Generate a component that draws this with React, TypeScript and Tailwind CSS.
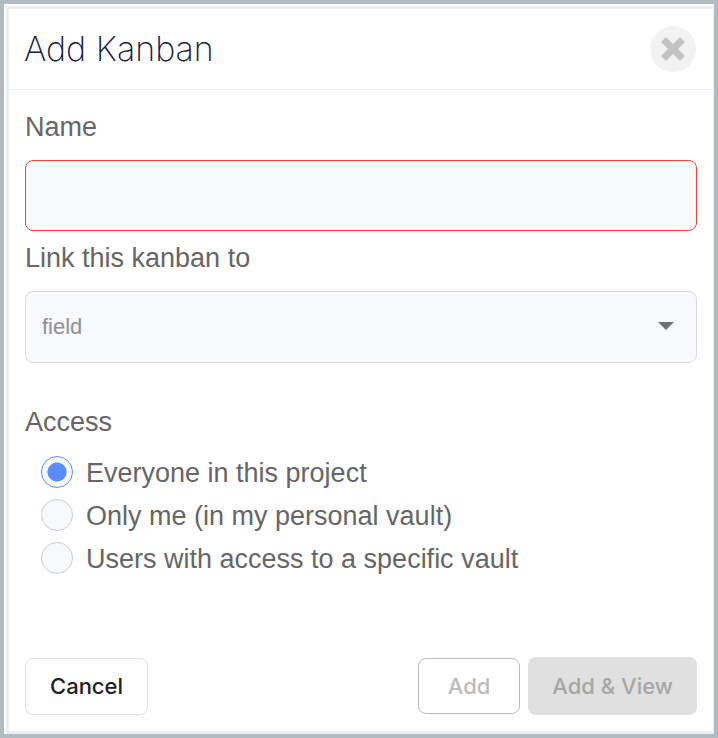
import { useState } from "react";

const accessOptions = [
  { value: "everyone", label: "Everyone in this project" },
  { value: "me", label: "Only me (in my personal vault)" },
  { value: "vault", label: "Users with access to a specific vault" },
];

const App = () => {
  const [name, setName] = useState("");
  const [field, setField] = useState("");
  const [access, setAccess] = useState("everyone");

  return (
    <div className="min-h-screen flex flex-col border-4 border-[#b3bbc2] bg-white pl-0.5 pt-0.5 font-['Liberation_Sans',Arial,sans-serif] text-[#666666]">
      <form className="flex-1 flex flex-col border-[3px] border-r border-[#ebeff5]">
        {/* HEADER */}
        <div className="flex items-center justify-between border-b border-[#ebebf3] pl-[15px] pr-[17px] h-[81px]">
          <h1 className="font-['Inter',sans-serif] font-extralight text-[34px] leading-10 text-[#152040]">
            Add Kanban
          </h1>
          <button
            type="button"
            aria-label="Close"
            className="flex items-center justify-center size-[46px] rounded-full bg-[#f2f2f2] text-[#c3c3c3]"
          >
            <svg viewBox="0 0 24 24" className="size-6" fill="currentColor" stroke="currentColor" strokeWidth="2" strokeLinejoin="round">
              <path d="M5 1.4 12 8.4l7-7L22.6 5l-7 7 7 7-3.6 3.6-7-7-7 7L1.4 19l7-7-7-7z" />
            </svg>
          </button>
        </div>

        {/* FIELDS */}
        <div className="flex flex-col px-4 pt-2.5">
          <label htmlFor="name" className="pt-2.5 pb-4 text-[27px] leading-[34px]">
            Name
          </label>
          <input
            id="name"
            value={name}
            onChange={(e) => setName(e.target.value)}
            className="w-full h-[71px] px-4 text-[22px] rounded-lg border border-[#f44336] bg-[#f7f9fd] outline-none"
          />

          <label htmlFor="field" className="pt-2.5 pb-4 text-[27px] leading-[34px]">
            Link this kanban to
          </label>
          <div className="relative">
            <select
              id="field"
              value={field}
              onChange={(e) => setField(e.target.value)}
              className="block appearance-none w-full h-[72px] px-4 pb-0.5 text-[22px] text-[#909090] rounded-lg border border-[#d9dbdf] bg-[#f7f9fd] outline-none"
            >
              <option value="">field</option>
            </select>
            <svg viewBox="0 0 16 8" className="absolute right-[23px] top-[31px] w-4 h-2 pointer-events-none" fill="#707173">
              <path d="M0 0h16L8 8z" />
            </svg>
          </div>
        </div>

        {/* ACCESS */}
        <fieldset className="px-4 pt-[42px]">
          <legend className="contents">
            <span className="block text-[27px] leading-[34px]">Access</span>
          </legend>
          <div className="flex flex-col gap-[9px] pt-[17px] pl-4">
            {accessOptions.map((option) => (
              <label key={option.value} className="flex items-start gap-[13px] text-[27px] leading-[34px]">
                <input
                  type="radio"
                  name="access"
                  value={option.value}
                  checked={access === option.value}
                  onChange={() => setAccess(option.value)}
                  className="appearance-none shrink-0 size-8 rounded-full border border-[#c5cde0] bg-[#f7f9fd] checked:border-[#5b8cff] checked:bg-[radial-gradient(circle,#5b8cff_9px,#f7f9fd_10px)]"
                />
                {option.label}
              </label>
            ))}
          </div>
        </fieldset>

        {/* ACTIONS */}
        <div className="mt-auto flex items-center justify-between px-4 pb-4 font-['Inter',sans-serif] font-medium text-[22px]">
          <button type="button" className="h-[57px] px-6 rounded-lg border border-[#dfdfdf] text-[#212121]">
            Cancel
          </button>
          <div className="flex items-center gap-2">
            <button type="submit" disabled className="h-14 px-[29px] rounded-lg border border-[#bcbcbc] text-[#bcbcbc]">
              Add
            </button>
            <button type="submit" disabled className="h-[58px] px-6 rounded-lg bg-[#e0e0e0] text-[#a6a6a6]">
              Add &amp; View
            </button>
          </div>
        </div>
      </form>
    </div>
  );
};

export default App;
